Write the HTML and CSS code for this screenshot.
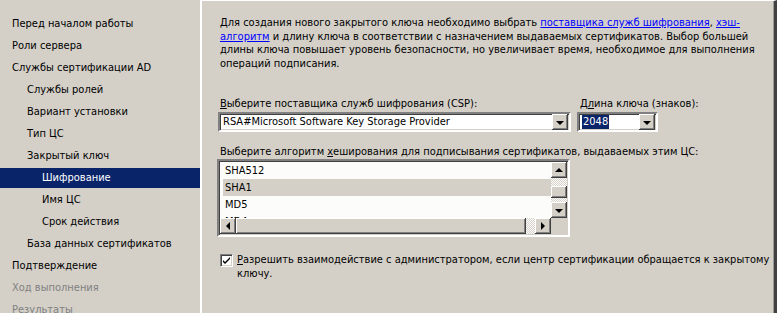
FILE: index.html
```html
<!DOCTYPE html>
<html lang="ru">
<head>
<meta charset="utf-8">
<title>Шифрование</title>
<link rel="stylesheet" href="styles.css">
</head>
<body>
<div class="wizard">
  <ul class="nav">
    <li class="l0">Перед началом работы</li>
    <li class="l0">Роли сервера</li>
    <li class="l0">Службы сертификации AD</li>
    <li class="l1">Службы ролей</li>
    <li class="l1">Вариант установки</li>
    <li class="l1">Тип ЦС</li>
    <li class="l1">Закрытый ключ</li>
    <li class="l2 active">Шифрование</li>
    <li class="l2">Имя ЦС</li>
    <li class="l2">Срок действия</li>
    <li class="l1">База данных сертификатов</li>
    <li class="l0">Подтверждение</li>
    <li class="l0 dim">Ход выполнения</li>
    <li class="l0 dim">Результаты</li>
  </ul>
  <div class="sep"></div>
  <main class="content">
    <p class="intro">Для создания нового закрытого ключа необходимо выбрать <a href="#">поставщика служб шифрования</a>, <a href="#">хэш-</a><br><a href="#">алгоритм</a> и длину ключа в соответствии с назначением выдаваемых сертификатов. Выбор большей<br>длины ключа повышает уровень безопасности, но увеличивает время, необходимое для выполнения<br>операций подписания.</p>

    <div class="row">
      <div class="field csp">
        <label class="lbl"><u>В</u>ыберите поставщика служб шифрования (CSP):</label>
        <div class="combo">
          <span class="value">RSA#Microsoft Software Key Storage Provider</span>
          <span class="btn"><span class="arrow-down"></span></span>
        </div>
      </div>
      <div class="field keylen">
        <label class="lbl">Д<u>л</u>ина ключа (знаков):</label>
        <div class="combo">
          <span class="value"><span class="sel">2048</span></span>
          <span class="btn"><span class="arrow-down"></span></span>
        </div>
      </div>
    </div>

    <div class="field hash">
      <label class="lbl">Выберите алгоритм <u>х</u>еширования для подписывания сертификатов, выдаваемых этим ЦС:</label>
      <div class="listbox">
        <div class="items">
          <div class="item">SHA512</div>
          <div class="item chosen">SHA1</div>
          <div class="item">MD5</div>
          <div class="item">MD4</div>
        </div>
        <div class="vscroll">
          <span class="btn"><span class="arrow-up"></span></span>
          <span class="track t1"></span>
          <span class="thumb"></span>
          <span class="track t2"></span>
          <span class="btn"><span class="arrow-down"></span></span>
        </div>
        <div class="hscroll">
          <span class="btn"><span class="arrow-left"></span></span>
          <span class="thumb"></span>
          <span class="track"></span>
          <span class="btn"><span class="arrow-right"></span></span>
        </div>
        <div class="corner"></div>
      </div>
    </div>

    <div class="check">
      <span class="box"><svg width="9" height="9" viewBox="0 0 9 9"><path d="M1 4 L3 6 L8 1 L8 3 L3 8 L1 6 Z" fill="#000"/></svg></span>
      <span class="ctext"><u>Р</u>азрешить взаимодействие с администратором, если центр сертификации обращается к закрытому<br>ключу.</span>
    </div>
  </main>
</div>
</body>
</html>
```

FILE: styles.css
```css
* { box-sizing: border-box; }
html, body {
  margin: 0;
  padding: 0;
}
body {
  width: 777px;
  height: 313px;
  overflow: hidden;
  background: #d4d0c8;
  font-family: "DejaVu Sans Condensed", "DejaVu Sans", "Liberation Sans", sans-serif;
  font-size: 11px;
  color: #000;
}
u { text-decoration: underline; }

.wizard {
  display: flex;
  height: 313px;
}

.nav {
  list-style: none;
  margin: 0;
  padding: 14px 0 0 0;
  width: 200px;
  flex: none;
  display: flex;
  flex-direction: column;
  gap: 2px;
}
.nav li {
  height: 20px;
  line-height: 20px;
  white-space: nowrap;
  flex: none;
}
.nav .l0 { padding-left: 12px; }
.nav .l1 { padding-left: 27px; }
.nav .l2 { padding-left: 42px; }
.nav .active { background: #0a246a; color: #fff; }
.nav .dim { color: #808080; }

.sep {
  width: 2px;
  flex: none;
  background: #fff;
}

.content {
  flex: 1;
  border-top: 1px solid #fff;
  border-right: 3px solid #404040;
  box-shadow: inset -1px 0 #9a9a96;
  padding: 15px 0 0 16px;
  min-width: 0;
}

.intro {
  margin: 0 0 0 2px;
  line-height: 13.5px;
  white-space: nowrap;
}
.intro a { color: #0000ff; text-decoration: underline; }

.row {
  display: flex;
  gap: 6px;
  margin-top: 27px;
}
.field { display: flex; flex-direction: column; }
.lbl {
  display: block;
  line-height: 13px;
  padding-left: 2px;
  margin-bottom: 2px;
  white-space: nowrap;
}
.csp { width: 353px; }
.keylen { width: 81px; }
.keylen .lbl { padding-left: 3px; }

.combo {
  height: 20px;
  background: #fff;
  border: 2px solid;
  border-color: #808080 #fff #fff #808080;
  box-shadow: inset 1px 1px #404040, inset -1px -1px #d4d0c8;
  display: flex;
  align-items: center;
  padding: 1px 1px 1px 2px;
}
.combo .value {
  flex: 1;
  white-space: nowrap;
  overflow: hidden;
  line-height: 14px;
  padding-left: 1px;
}
.sel {
  background: #0a246a;
  color: #fff;
  padding: 0 1px;
  display: inline-block;
  line-height: 14px;
}

.btn {
  width: 16px;
  height: 16px;
  flex: none;
  background: #d4d0c8;
  box-shadow: inset -1px -1px #404040, inset 1px 1px #fff, inset -2px -2px #808080, inset 2px 2px #d4d0c8;
  display: flex;
  align-items: center;
  justify-content: center;
}
.arrow-down, .arrow-up, .arrow-left, .arrow-right {
  width: 0; height: 0;
  border-style: solid;
}
.arrow-down { border-width: 4px 4px 0 4px; border-color: #000 transparent transparent transparent; margin-top: 1px; }
.arrow-up { border-width: 0 4px 4px 4px; border-color: transparent transparent #000 transparent; }
.arrow-left { border-width: 4px 4px 4px 0; border-color: transparent #000 transparent transparent; }
.arrow-right { border-width: 4px 0 4px 4px; border-color: transparent transparent transparent #000; }

.hash { margin-top: 13px; width: 352px; }
.hash .lbl { margin-bottom: 1px; }

.listbox {
  height: 78px;
  background: #fcfcfa;
  border: 2px solid;
  border-color: #808080 #fff #fff #808080;
  box-shadow: inset 1px 1px #404040, inset -1px -1px #d4d0c8;
  display: grid;
  grid-template-columns: 1fr 16px;
  grid-template-rows: 1fr 16px;
  padding: 1px;
  margin-left: -1px;
}
.items {
  overflow: hidden;
  padding: 0 0 0 3px;
}
.item {
  height: 17px;
  line-height: 17px;
  padding-left: 2px;
}
.item.chosen { background: #d4d0c8; }

.vscroll {
  display: flex;
  flex-direction: column;
}
.vscroll .track, .hscroll .track {
  background-color: #fff;
  background-image: repeating-conic-gradient(#d4d0c8 0 25%, #fff 0 50%);
  background-size: 2px 2px;
}
.vscroll .t1 { height: 8px; }
.vscroll .t2 { flex: 1; }
.vscroll .thumb { height: 12px; }
.thumb {
  background: #d4d0c8;
  box-shadow: inset -1px -1px #404040, inset 1px 1px #fff, inset -2px -2px #808080, inset 2px 2px #d4d0c8;
}
.hscroll {
  display: flex;
}
.hscroll .thumb { width: 290px; }
.hscroll .track { flex: 1; }
.corner { background: #d4d0c8; }

.check {
  display: flex;
  align-items: flex-start;
  margin-top: 16px;
  margin-left: 2px;
}
.box {
  width: 13px;
  height: 13px;
  flex: none;
  background: #fff;
  border: 1px solid;
  border-color: #808080 #fff #fff #808080;
  box-shadow: inset 1px 1px #404040, inset -1px -1px #d4d0c8;
  display: flex;
  align-items: center;
  justify-content: center;
  margin-top: 1px;
}
.ctext {
  margin-left: 4px;
  line-height: 14px;
  white-space: nowrap;
}
```
